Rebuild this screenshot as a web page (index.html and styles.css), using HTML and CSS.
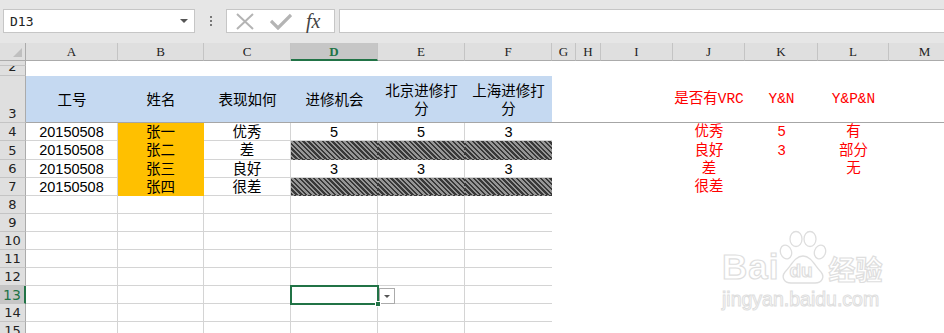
FILE: index.html
```html
<!DOCTYPE html>
<html lang="zh">
<head>
    <meta charset="UTF-8">
    <meta name="viewport" content="width=device-width, initial-scale=1.0">
    <title>Sheet1</title>
    <link rel="stylesheet" href="styles.css">
</head>
<body>
    <div class="topbar">
        <div class="namebox">
            <span class="name">D13</span>
            <span class="caret"></span>
        </div>
        <div class="grip"><i></i><i></i><i></i></div>
        <div class="fbtns">
            <svg class="ico" width="20" height="17" viewBox="0 0 20 17">
                <path d="M2 1 L18 16 M18 1 L2 16" stroke="#b4b4b4" stroke-width="2" fill="none"/>
            </svg>
            <svg class="ico" width="22" height="17" viewBox="0 0 22 17">
                <path d="M1 8 L8 15 L21 2" stroke="#b4b4b4" stroke-width="3.2" fill="none"/>
            </svg>
            <span class="fx">fx</span>
        </div>
        <div class="finput"></div>
    </div>

    <div class="sheet" id="sheet"></div>

    <!-- watermark -->
    <div class="mark">
        <div class="mark-top">
            <span class="mark-bai">Bai</span>
            <span class="paw">
                <svg width="48" height="54" viewBox="0 0 48 54">
                    <g fill="#fff" stroke="#dedede" stroke-width="1.3">
                        <ellipse cx="7" cy="22" rx="5.5" ry="7" transform="rotate(-20 7 22)"/>
                        <ellipse cx="17" cy="9" rx="6" ry="7.5"/>
                        <ellipse cx="31" cy="9" rx="6" ry="7.5"/>
                        <ellipse cx="41" cy="22" rx="5.5" ry="7" transform="rotate(20 41 22)"/>
                        <path d="M24 26 C16 26 12 36 6 42 C2 47 5 53 12 53 L36 53 C43 53 46 47 42 42 C36 36 32 26 24 26 Z"/>
                    </g>
                </svg>
                <span class="mark-du">du</span>
            </span>
            <span class="mark-jy">经验</span>
        </div>
        <div class="mark-url">jingyan.baidu.com</div>
    </div>

    <script>
        document.addEventListener('DOMContentLoaded', () => {
            const sheet = document.getElementById('sheet');
            const cols = ['A', 'B', 'C', 'D', 'E', 'F', 'G', 'H', 'I', 'J', 'K', 'L', 'M'];
            const table = ['A', 'B', 'C', 'D', 'E', 'F'];
            const red = ['J', 'K', 'L'];

            const data = {
                3: { A: '工号', B: '姓名', C: '表现如何', D: '进修机会', E: '北京进修打分', F: '上海进修打分', J: '是否有VRC', K: 'Y&N', L: 'Y&P&N' },
                4: { A: '20150508', B: '张一', C: '优秀', D: '5', E: '5', F: '3', J: '优秀', K: '5', L: '有' },
                5: { A: '20150508', B: '张二', C: '差', J: '良好', K: '3', L: '部分' },
                6: { A: '20150508', B: '张三', C: '良好', D: '3', E: '3', F: '3', J: '差', L: '无' },
                7: { A: '20150508', B: '张四', C: '很差', J: '很差' }
            };

            const add = (cls, text) => {
                const div = document.createElement('div');
                div.className = cls;
                if (text) div.textContent = text;
                sheet.appendChild(div);
                return div;
            };

            // column headers
            add('corner');
            cols.forEach(c => add(c === 'D' ? 'ch sel' : 'ch', c));

            for (let r = 1; r <= 15; r++) {
                const rh = add(r === 13 ? 'rh sel' : 'rh');
                const num = document.createElement('span');
                num.textContent = r;
                rh.appendChild(num);
                const row = data[r] || {};
                cols.forEach(c => {
                    let cls = 'cell';
                    const inTable = table.includes(c);
                    if (r === 3) {
                        cls += inTable ? ' head' : '';
                        cls += ' r3';
                    } else if (r >= 4 && inTable) {
                        cls += ' grid';
                        if (c === 'F') cls += ' last';
                        if (c === 'B' && r <= 7) cls += ' orange';
                        if ((r === 5 || r === 7) && ['D', 'E', 'F'].includes(c)) cls += ' hatch';
                    }
                    if (red.includes(c) && r >= 3 && r <= 7) cls += ' red';
                    const cell = add(cls, row[c]);
                    if (r === 13 && c === 'D') {
                        cell.classList.add('active');
                        const dd = document.createElement('span');
                        dd.className = 'dropdown';
                        cell.appendChild(dd);
                    }
                });
            }
        });
    </script>
</body>
</html>
```

FILE: styles.css
```css
body {
    margin: 0;
    padding: 0;
    width: 944px;
    height: 333px;
    overflow: hidden;
    background: #fff;
    font-family: "Liberation Sans", "Noto Sans CJK SC", sans-serif;
    position: relative;
}

/* formula bar */
.topbar {
    height: 43px;
    box-sizing: border-box;
    padding-top: 9px;
    background: #e6e6e6;
    display: flex;
    align-items: flex-start;
}

.namebox {
    margin-left: 3px;
    width: 192px;
    height: 24px;
    box-sizing: border-box;
    background: #fff;
    border: 1px solid #c6c6c6;
    display: flex;
    align-items: center;
    justify-content: space-between;
    padding: 0 6px 0 6px;
}

.name {
    font-family: "DejaVu Sans Mono", monospace;
    font-size: 13px;
    color: #222;
}

.caret {
    width: 0;
    height: 0;
    border-left: 4px solid transparent;
    border-right: 4px solid transparent;
    border-top: 4px solid #555;
}

.grip {
    width: 31px;
    height: 24px;
    display: flex;
    flex-direction: column;
    align-items: center;
    justify-content: center;
    gap: 2px;
}

.grip i {
    width: 2px;
    height: 2px;
    background: #777;
}

.fbtns {
    width: 109px;
    height: 24px;
    box-sizing: border-box;
    background: #fff;
    border: 1px solid #c6c6c6;
    display: flex;
    align-items: center;
    padding-left: 8px;
    gap: 15px;
}

.fx {
    font-family: "Liberation Serif", serif;
    font-style: italic;
    font-size: 20px;
    color: #444;
    line-height: 20px;
    margin-left: -1px;
}

.finput {
    margin-left: 4px;
    flex: 1;
    height: 24px;
    box-sizing: border-box;
    background: #fff;
    border: 1px solid #c6c6c6;
    border-right: none;
}

/* sheet grid */
.sheet {
    display: grid;
    grid-template-columns: 26px 92px 86px 87px 87px 87px 87px 24px 25px 72px 72px 73px 71px 72px;
    grid-template-rows: 18px 5px 10px 47px 18px 19px 18px 18px repeat(8, 18px);
}

.corner {
    background: #dfdfdf;
    border-right: 1px solid #ababab;
    border-bottom: 1px solid #ababab;
    position: relative;
}

.corner::after {
    content: "";
    position: absolute;
    right: 3px;
    bottom: 3px;
    width: 0;
    height: 0;
    border-left: 9px solid transparent;
    border-bottom: 9px solid #bfbfbf;
}

.ch {
    background: #dfdfdf;
    border-right: 1px solid #c4c4c4;
    border-bottom: 1px solid #ababab;
    font-family: "Liberation Serif", serif;
    font-size: 13px;
    color: #222;
    display: flex;
    align-items: center;
    justify-content: center;
    padding-top: 1px;
}

.ch.sel {
    background: #c6c6c6;
    color: #217346;
    font-weight: bold;
    border-bottom: 2px solid #217346;
}

.rh {
    background: #dfdfdf;
    border-right: 1px solid #ababab;
    border-bottom: 1px solid #c4c4c4;
    font-family: "DejaVu Sans", sans-serif;
    font-size: 13px;
    line-height: 16px;
    color: #222;
    display: flex;
    align-items: flex-end;
    justify-content: center;
    overflow: hidden;
    min-height: 0;
}

.rh span {
    flex: none;
}

.rh.sel {
    background: #c6c6c6;
    color: #217346;
    border-right: 2px solid #217346;
    font-size: 14px;
}

.cell {
    font-size: 14.5px;
    line-height: 18px;
    color: #000;
    display: flex;
    align-items: center;
    justify-content: center;
    text-align: center;
    padding: 0 4px;
    white-space: normal;
    min-width: 0;
}

.cell.r3 {
    border-bottom: 1px solid #a6a6a6;
}

.cell.head {
    background: #c5d9f1;
    padding-top: 1px;
}

.cell.grid {
    border-right: 1px solid #d4d4d4;
    border-bottom: 1px solid #d4d4d4;
}

.cell.grid.last {
    border-right: none;
}

.cell.orange {
    background: #ffc000;
    border-color: #ffc000;
}

.cell.hatch {
    border-color: transparent;
    background: repeating-linear-gradient(45deg, #383838 0, #383838 1.7px, #969696 1.7px, #969696 3.4px);
}

.cell.red {
    color: #ff0000;
    font-family: "Liberation Mono", "Noto Sans CJK SC", monospace;
    white-space: nowrap;
    overflow: visible;
}

.cell.active {
    position: relative;
}

.cell.active::before {
    content: "";
    position: absolute;
    left: -1px;
    top: -1px;
    right: -2px;
    bottom: -2px;
    border: 2px solid #217346;
}

.cell.active::after {
    content: "";
    position: absolute;
    right: -4px;
    bottom: -4px;
    width: 4px;
    height: 4px;
    background: #217346;
    border: 1px solid #fff;
}

.dropdown {
    position: absolute;
    left: 88px;
    top: 2px;
    width: 16px;
    height: 16px;
    box-sizing: border-box;
    background: #fff;
    border: 1px solid #ababab;
}

.dropdown::after {
    content: "";
    position: absolute;
    left: 4px;
    top: 6px;
    border-left: 3px solid transparent;
    border-right: 3px solid transparent;
    border-top: 3px solid #555;
}

/* watermark */
.mark {
    position: absolute;
    left: 722px;
    top: 230px;
    display: flex;
    flex-direction: column;
    color: #fff;
    -webkit-text-stroke: 1.2px #dedede;
}

.mark-top {
    display: flex;
    align-items: flex-end;
}

.mark-bai {
    font-family: "Liberation Sans", sans-serif;
    font-weight: bold;
    font-size: 35px;
    line-height: 30px;
    margin-bottom: 2px;
    letter-spacing: 1px;
}

.paw {
    position: relative;
    width: 48px;
    height: 54px;
    margin-left: 0;
}

.paw svg {
    display: block;
}

.mark-du {
    position: absolute;
    left: 10px;
    top: 31px;
    font-family: "Liberation Sans", sans-serif;
    font-weight: bold;
    font-size: 19px;
    line-height: 20px;
}

.mark-jy {
    font-family: "Noto Sans CJK SC", sans-serif;
    font-weight: bold;
    font-size: 27px;
    line-height: 30px;
    margin-left: 1px;
}

.mark-url {
    font-family: "Liberation Sans", sans-serif;
    font-size: 19.5px;
    line-height: 22px;
    margin-top: 4px;
    -webkit-text-stroke: 1px #dedede;
}
```
